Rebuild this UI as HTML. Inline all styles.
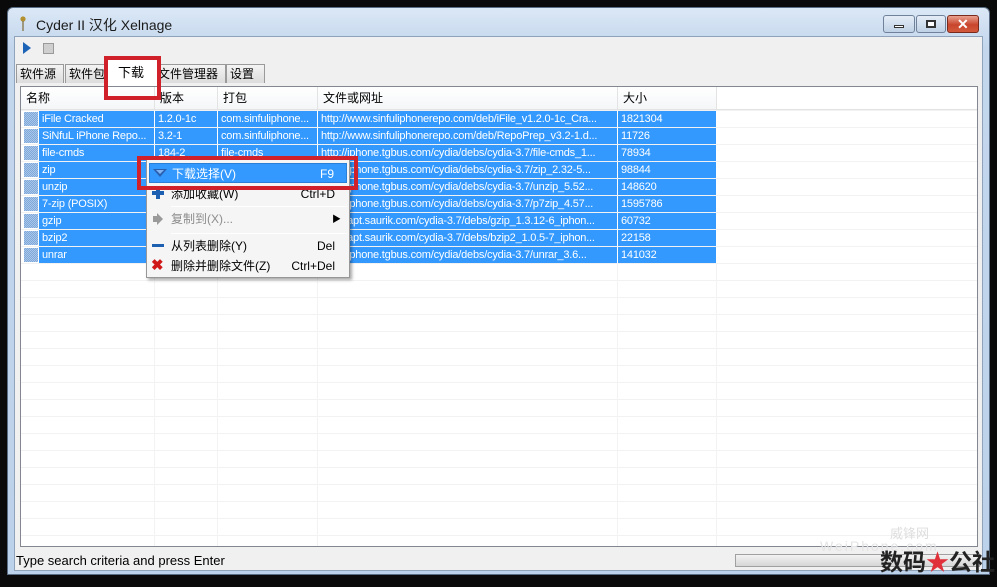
<!DOCTYPE html>
<html><head><meta charset="utf-8"><style>
*{margin:0;padding:0;box-sizing:border-box}
body{width:997px;height:587px;background:#0a0a0a;position:relative;overflow:hidden;font-family:"Liberation Sans","Noto Sans CJK SC",sans-serif;font-size:12px;color:#000}
.abs{position:absolute}
#frame{left:7px;top:7px;width:983px;height:568px;background:linear-gradient(#dbe8f6,#c3d6ec 40px,#bcd2ea);border:1px solid #5a6d84;border-radius:6px 6px 0 0}
#client{left:14px;top:36px;width:969px;height:535px;background:#f0f0f0;border:1px solid #8fa3bb}
.title{left:36px;top:15px;font-size:14px;color:#1b1b1b}
.wb{top:15px;height:18px;border:1px solid #6f829a;border-radius:3px;background:linear-gradient(#e4edf7,#c0d2e6)}
.tab{top:64px;height:19px;border:1px solid #9a9a9a;border-bottom:none;background:linear-gradient(#f4f4f4,#dcdcdc);font-size:12px;padding:0 3px;line-height:18px;white-space:nowrap;overflow:hidden}
#list{left:20px;top:86px;width:958px;height:461px;border:1px solid #828790;background:#fff;
 background-image:repeating-linear-gradient(#fff 0 16px,#f2f2f2 16px 17px);background-position:0 24px}
.vl{position:absolute;top:0;width:1px;height:100%;background:#f3f3f3}
.hd{left:21px;top:87px;width:956px;height:23px;background:#fff;border-bottom:1px solid #e2e2e2}
.hc{position:absolute;top:0;height:22px;line-height:22px;font-size:12px;padding-left:5px;border-right:1px solid #e3e3e3;background:linear-gradient(#fff,#f4f6f8)}
.row{position:absolute;left:24px;height:16px;width:693px;font-size:11px;color:#fff;line-height:16px}
.row span{position:absolute;top:0;height:16px;background:#3399ff;padding-left:3px;white-space:nowrap;overflow:hidden;border-right:1px solid #fff;letter-spacing:-0.2px}
.chk{position:absolute;left:0;top:1px;width:14px;height:14px;background:repeating-conic-gradient(#7fa8d8 0 25%,#a9c7ea 0 50%) 0 0/2px 2px}
#menu{left:146px;top:159px;width:204px;height:119px;background:#f5f5f5;border:1px solid #979797;box-shadow:2px 2px 3px rgba(0,0,0,.35)}
.mi{position:absolute;left:2px;width:198px;height:20px;line-height:20px;font-size:12px}
.mi .t{position:absolute;left:22px}
.mi .k{position:absolute;right:12px}
.sep{position:absolute;left:24px;width:176px;height:1px;background:#d5d5d5;border-bottom:1px solid #fff}
.red{border:4px solid #d0202a}
</style></head><body>
<div id="frame" class="abs"></div>
<div class="abs" style="left:20px;top:16px;width:6px;height:16px"><svg width="6" height="16"><circle cx="3" cy="3" r="2.6" fill="#b39030"/><rect x="2.3" y="5" width="1.4" height="10" fill="#8a7a50"/></svg></div>
<div class="abs title">Cyder II 汉化 Xelnage</div>
<div class="abs wb" style="left:883px;width:32px"><div class="abs" style="left:10px;top:9px;width:10px;height:3px;background:#fff;border:1px solid #333"></div></div>
<div class="abs wb" style="left:916px;width:30px"><div class="abs" style="left:9px;top:4px;width:10px;height:8px;border:2px solid #333;background:#fff"></div></div>
<div class="abs wb" style="left:947px;width:32px;border-color:#7a2a1a;background:linear-gradient(#e9a290,#c8452c 55%,#d35a3c)"><div class="abs" style="left:9px;top:0;color:#fff;font-weight:bold;font-size:14px;line-height:16px">✕</div></div>
<div id="client" class="abs"></div>
<svg class="abs" style="left:22px;top:41px" width="10" height="14"><path d="M1 1 L9 7 L1 13Z" fill="#1d64b8"/></svg>
<div class="abs" style="left:43px;top:43px;width:11px;height:11px;background:#cfcfcf;border:1px solid #9a9a9a"></div>
<div class="abs tab" style="left:16px;width:48px">软件源</div>
<div class="abs tab" style="left:65px;width:44px">软件包</div>
<div class="abs tab" style="left:154px;width:72px">文件管理器</div>
<div class="abs tab" style="left:226px;width:39px">设置</div>
<div class="abs" style="left:108px;top:59px;width:50px;height:27px;background:#fff;font-size:13px;padding:3px 0 0 10px">下载</div>
<div id="list" class="abs">
<div class="vl" style="left:133px"></div><div class="vl" style="left:196px"></div><div class="vl" style="left:296px"></div><div class="vl" style="left:596px"></div><div class="vl" style="left:695px"></div>
</div>
<div class="abs hd">
<div class="hc" style="left:0;width:134px">名称</div>
<div class="hc" style="left:134px;width:63px">版本</div>
<div class="hc" style="left:197px;width:100px">打包</div>
<div class="hc" style="left:297px;width:300px">文件或网址</div>
<div class="hc" style="left:597px;width:99px">大小</div>
</div>
<div class="row" style="top:111px"><div class="chk"></div><span style="left:15px;width:116px">iFile Cracked</span><span style="left:131px;width:63px">1.2.0-1c</span><span style="left:194px;width:100px">com.sinfuliphone...</span><span style="left:294px;width:300px">http://www.sinfuliphonerepo.com/deb/iFile_v1.2.0-1c_Cra...</span><span style="left:594px;width:99px">1821304</span></div>
<div class="row" style="top:128px"><div class="chk"></div><span style="left:15px;width:116px">SiNfuL iPhone Repo...</span><span style="left:131px;width:63px">3.2-1</span><span style="left:194px;width:100px">com.sinfuliphone...</span><span style="left:294px;width:300px">http://www.sinfuliphonerepo.com/deb/RepoPrep_v3.2-1.d...</span><span style="left:594px;width:99px">11726</span></div>
<div class="row" style="top:145px"><div class="chk"></div><span style="left:15px;width:116px">file-cmds</span><span style="left:131px;width:63px">184-2</span><span style="left:194px;width:100px">file-cmds</span><span style="left:294px;width:300px">http://iphone.tgbus.com/cydia/debs/cydia-3.7/file-cmds_1...</span><span style="left:594px;width:99px">78934</span></div>
<div class="row" style="top:162px"><div class="chk"></div><span style="left:15px;width:116px">zip</span><span style="left:131px;width:63px"></span><span style="left:194px;width:100px"></span><span style="left:294px;width:300px">http://iphone.tgbus.com/cydia/debs/cydia-3.7/zip_2.32-5...</span><span style="left:594px;width:99px">98844</span></div>
<div class="row" style="top:179px"><div class="chk"></div><span style="left:15px;width:116px">unzip</span><span style="left:131px;width:63px"></span><span style="left:194px;width:100px"></span><span style="left:294px;width:300px">http://iphone.tgbus.com/cydia/debs/cydia-3.7/unzip_5.52...</span><span style="left:594px;width:99px">148620</span></div>
<div class="row" style="top:196px"><div class="chk"></div><span style="left:15px;width:116px">7-zip (POSIX)</span><span style="left:131px;width:63px"></span><span style="left:194px;width:100px"></span><span style="left:294px;width:300px">http://iphone.tgbus.com/cydia/debs/cydia-3.7/p7zip_4.57...</span><span style="left:594px;width:99px">1595786</span></div>
<div class="row" style="top:213px"><div class="chk"></div><span style="left:15px;width:116px">gzip</span><span style="left:131px;width:63px"></span><span style="left:194px;width:100px"></span><span style="left:294px;width:300px">http://apt.saurik.com/cydia-3.7/debs/gzip_1.3.12-6_iphon...</span><span style="left:594px;width:99px">60732</span></div>
<div class="row" style="top:230px"><div class="chk"></div><span style="left:15px;width:116px">bzip2</span><span style="left:131px;width:63px"></span><span style="left:194px;width:100px"></span><span style="left:294px;width:300px">http://apt.saurik.com/cydia-3.7/debs/bzip2_1.0.5-7_iphon...</span><span style="left:594px;width:99px">22158</span></div>
<div class="row" style="top:247px"><div class="chk"></div><span style="left:15px;width:116px">unrar</span><span style="left:131px;width:63px"></span><span style="left:194px;width:100px"></span><span style="left:294px;width:300px">http://iphone.tgbus.com/cydia/debs/cydia-3.7/unrar_3.6...</span><span style="left:594px;width:99px">141032</span></div>
<div id="menu" class="abs">
<div class="mi" style="top:3px;background:#3399ff;color:#fff;border:1px solid #2a7fd6"><svg class="abs" style="left:3px;top:4px" width="14" height="10"><path d="M0 1 L14 1 L7 9Z" fill="#2a5fb0"/><path d="M3 2 L11 2 L7 6Z" fill="#7fb2f0"/></svg><span class="t">下载选择(V)</span><span class="k">F9</span></div>
<div class="mi" style="top:24px"><svg class="abs" style="left:3px;top:3px" width="12" height="12"><path d="M4 0h4v4h4v4H8v4H4V8H0V4h4z" fill="#1d5fb0"/></svg><span class="t">添加收藏(W)</span><span class="k">Ctrl+D</span></div>
<div class="sep" style="top:46px"></div>
<div class="mi" style="top:49px;color:#8d8d8d"><svg class="abs" style="left:4px;top:4px" width="10" height="12"><path d="M0 3h4V0l6 6-6 6V9H0z" fill="#9a9a9a"/></svg><span class="t">复制到(X)...</span><span class="abs" style="right:6px;color:#000;font-size:9px">▶</span></div>
<div class="sep" style="top:73px"></div>
<div class="mi" style="top:76px"><div class="abs" style="left:3px;top:8px;width:12px;height:3px;background:#1d5fb0"></div><span class="t">从列表删除(Y)</span><span class="k">Del</span></div>
<div class="mi" style="top:96px"><span class="abs" style="left:2px;color:#d01818;font-weight:bold;font-size:15px">✖</span><span class="t">删除并删除文件(Z)</span><span class="k">Ctrl+Del</span></div>
</div>
<div class="abs red" style="left:104px;top:56px;width:57px;height:44px"></div>
<div class="abs red" style="left:137px;top:156px;width:221px;height:34px"></div>
<div class="abs" style="left:16px;top:553px;font-size:13px">Type search criteria and press Enter</div>
<div class="abs" style="left:735px;top:554px;width:245px;height:13px;border:1px solid #a0a0a0;background:linear-gradient(#f2f2f2,#d6d6d6)"></div>
<div class="abs" style="left:890px;top:523px;color:#ddd;font-size:13px">威锋网</div>
<div class="abs" style="left:820px;top:538px;color:#e4e4e4;font-size:14px;letter-spacing:2px">WeiPhone.com</div>
<div class="abs" style="left:880px;top:545px;font-size:23px;font-weight:bold;color:#222;font-family:'Noto Sans CJK SC',sans-serif;line-height:30px">数码<span style="color:#e0303a">★</span>公社</div>
</body></html>
